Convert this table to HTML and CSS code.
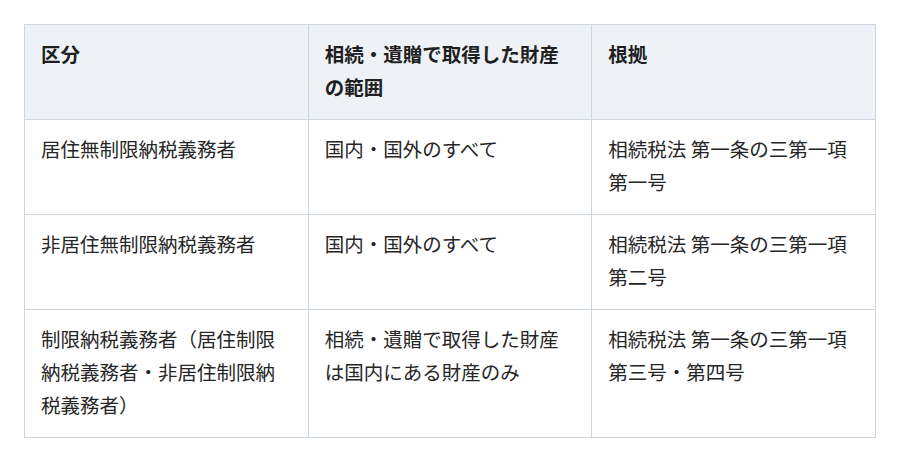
FILE: index.html
```html
<!DOCTYPE html>
<html lang="ja">
<head>
<meta charset="utf-8">
<link rel="stylesheet" href="styles.css">
</head>
<body>
<div class="wrap">
<table class="tax-table">
  <thead>
    <tr>
      <th>区分</th>
      <th>相続・遺贈で取得した財産の範囲</th>
      <th>根拠</th>
    </tr>
  </thead>
  <tbody>
    <tr>
      <td>居住無制限納税義務者</td>
      <td>国内・国外のすべて</td>
      <td>相続税法 第一条の三第一項第一号</td>
    </tr>
    <tr>
      <td>非居住無制限納税義務者</td>
      <td>国内・国外のすべて</td>
      <td>相続税法 第一条の三第一項第二号</td>
    </tr>
    <tr>
      <td>制限納税義務者（居住制限納税義務者・非居住制限納税義務者）</td>
      <td>相続・遺贈で取得した財産は国内にある財産のみ</td>
      <td>相続税法 第一条の三第一項第三号・第四号</td>
    </tr>
  </tbody>
</table>
</div>
</body>
</html>
```

FILE: styles.css
```css
html, body {
  margin: 0;
  padding: 0;
  background: #ffffff;
}
.wrap {
  padding: 24px;
}
.tax-table {
  width: 100%;
  table-layout: fixed;
  border-collapse: collapse;
  font-family: "Noto Sans CJK JP", "Noto Sans", sans-serif;
  font-size: 19.5px;
  line-height: 33px;
  color: #262626;
}
.tax-table th,
.tax-table td {
  border: 1px solid #cdd5de;
  padding: 12px 16px 16px 16px;
  text-align: left;
  vertical-align: top;
  word-break: break-all;
}
.tax-table th {
  background: #eef2f7;
  font-weight: 700;
  color: #1f1f1f;
}
```
